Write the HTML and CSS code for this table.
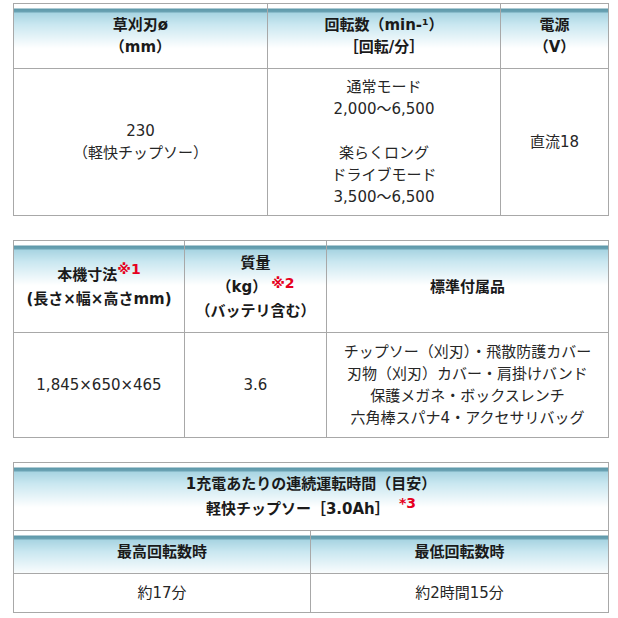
FILE: index.html
```html
<!DOCTYPE html>
<html lang="ja">
<head>
<meta charset="utf-8">
<link rel="stylesheet" href="styles.css">
</head>
<body>
<table class="spec t1">
  <colgroup><col class="c1a"><col class="c1b"><col class="c1c"></colgroup>
  <tr class="hrow">
    <th>草刈刃ø<br>（mm）</th>
    <th>回転数（min-¹）<br>［回転/分］</th>
    <th>電源<br>（V）</th>
  </tr>
  <tr class="brow">
    <td>230<br>（軽快チップソー）</td>
    <td>通常モード<br>2,000～6,500<br><br>楽らくロング<br>ドライブモード<br>3,500～6,500</td>
    <td>直流18</td>
  </tr>
</table>

<table class="spec t2">
  <colgroup><col class="c2a"><col class="c2b"><col class="c2c"></colgroup>
  <tr class="hrow">
    <th>本機寸法<span class="mark m1">※1</span><br>(長さ×幅×高さmm)</th>
    <th>質量<br>（kg）<span class="mark m2">※2</span><br>（バッテリ含む）</th>
    <th>標準付属品</th>
  </tr>
  <tr class="brow">
    <td>1,845×650×465</td>
    <td>3.6</td>
    <td>チップソー（刈刃）・飛散防護カバー<br>刃物（刈刃）カバー・肩掛けバンド<br>保護メガネ・ボックスレンチ<br>六角棒スパナ4・アクセサリバッグ</td>
  </tr>
</table>

<table class="spec t3">
  <colgroup><col class="c3a"><col class="c3b"></colgroup>
  <tr class="hrow1">
    <th colspan="2">1充電あたりの連続運転時間（目安）<br>軽快チップソー［3.0Ah］ <span class="mark m3">*3</span></th>
  </tr>
  <tr class="hrow2">
    <th>最高回転数時</th>
    <th>最低回転数時</th>
  </tr>
  <tr class="brow">
    <td>約17分</td>
    <td>約2時間15分</td>
  </tr>
</table>
</body>
</html>
```

FILE: styles.css
```css
html, body {
  margin: 0;
  padding: 0;
  background: #ffffff;
}

body {
  padding: 3px 10px 0 13px;
  font-family: "DejaVu Sans", "Noto Sans CJK JP", sans-serif;
  font-size: 15px;
  line-height: 22px;
  color: #222222;
}

.spec {
  width: 595px;
  border-collapse: collapse;
  table-layout: fixed;
  border: 1px solid #a8a8a8;
}

.spec + .spec {
  margin-top: 24px;
}

.spec th,
.spec td {
  border: 1px solid #a8a8a8;
  padding: 0;
  text-align: center;
  vertical-align: middle;
}

.spec th {
  font-weight: bold;
  color: #1a1a1a;
  background: linear-gradient(to bottom,
    #ffffff 0px, #ffffff 4px,
    #5b96a8 4px, #6da5b6 8px,
    #a6d3e1 8px, #c9e7f0 20px, #ffffff 44px);
}

.spec td {
  color: #262626;
}

.c1a { width: 254px; }
.c1b { width: 233px; }
.c1c { width: 108px; }

.t1 .hrow th { height: 64px; }
.t1 .brow td { height: 146px; }

.c2a { width: 171px; }
.c2b { width: 142px; }
.c2c { width: 282px; }

.t2 .hrow th { height: 91px; line-height: 24px; }
.t2 .brow td { height: 104px; }

.c3a { width: 297px; }
.c3b { width: 298px; }

.t3 .hrow1 th { height: 67px; line-height: 25px; }
.t3 .hrow2 th { height: 42px; }
.t3 .brow td { height: 38px; }

.mark {
  color: #e60020;
  font-weight: bold;
  font-size: 14px;
  line-height: 0;
  position: relative;
}

.m1 { top: -6px; }
.m2 { top: -4px; margin-left: 4px; }
.m3 { top: -6px; margin-left: 4px; }
```
